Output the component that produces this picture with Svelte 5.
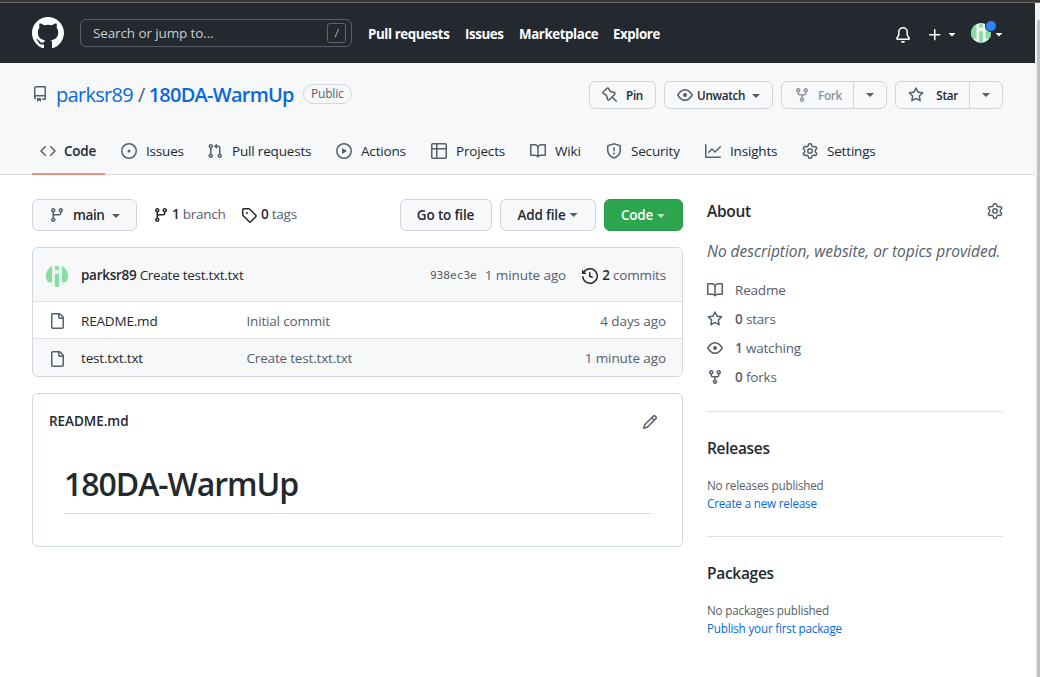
<script>
  const icons = {
    mark: 'M8 0C3.58 0 0 3.58 0 8c0 3.54 2.29 6.53 5.47 7.59.4.07.55-.17.55-.38 0-.19-.01-.82-.01-1.49-2.01.37-2.53-.49-2.69-.94-.09-.23-.48-.94-.82-1.13-.28-.15-.68-.52-.01-.53.63-.01 1.08.58 1.23.82.72 1.21 1.87.87 2.33.66.07-.52.28-.87.51-1.07-1.78-.2-3.64-.89-3.64-3.95 0-.87.31-1.59.82-2.15-.08-.2-.36-1.02.08-2.12 0 0 .67-.21 2.2.82.64-.18 1.32-.27 2-.27.68 0 1.36.09 2 .27 1.53-1.04 2.2-.82 2.2-.82.44 1.1.16 1.92.08 2.12.51.56.82 1.27.82 2.15 0 3.07-1.87 3.75-3.65 3.95.29.25.54.73.54 1.48 0 1.07-.01 1.93-.01 2.2 0 .21.15.46.55.38A8.013 8.013 0 0016 8c0-4.42-3.58-8-8-8z',
    repo: 'M2 2.5A2.5 2.5 0 014.5 0h8.75a.75.75 0 01.75.75v12.5a.75.75 0 01-.75.75h-2.5a.75.75 0 110-1.5h1.75v-2h-8a1 1 0 00-.714 1.7.75.75 0 01-1.072 1.05A2.495 2.495 0 012 11.5v-9zm10.5-1V9h-8c-.356 0-.694.074-1 .208V2.5a1 1 0 011-1h8zM5 12.25v3.25a.25.25 0 00.4.2l1.45-1.087a.25.25 0 01.3 0L8.6 15.7a.25.25 0 00.4-.2v-3.25a.25.25 0 00-.25-.25h-3.5a.25.25 0 00-.25.25z',
    code: 'M4.72 3.22a.75.75 0 011.06 1.06L2.06 8l3.72 3.72a.75.75 0 11-1.06 1.06L.47 8.53a.75.75 0 010-1.06l4.25-4.25zm6.56 0a.75.75 0 10-1.06 1.06L13.94 8l-3.72 3.72a.75.75 0 101.06 1.06l4.25-4.25a.75.75 0 000-1.06l-4.25-4.25z',
    issue: 'M8 9.5a1.5 1.5 0 100-3 1.5 1.5 0 000 3zM8 0a8 8 0 100 16A8 8 0 008 0zM1.5 8a6.5 6.5 0 1113 0 6.5 6.5 0 01-13 0z',
    pull: 'M7.177 3.073L9.573.677A.25.25 0 0110 .854v4.792a.25.25 0 01-.427.177L7.177 3.427a.25.25 0 010-.354zM3.75 2.5a.75.75 0 100 1.5.75.75 0 000-1.5zm-2.25.75a2.25 2.25 0 113 2.122v5.256a2.251 2.251 0 11-1.5 0V5.372A2.25 2.25 0 011.5 3.25zM11 2.5h-1V4h1a1 1 0 011 1v5.628a2.251 2.251 0 101.5 0V5A2.5 2.5 0 0011 2.5zm1 10.25a.75.75 0 111.5 0 .75.75 0 01-1.5 0zM3.75 12a.75.75 0 100 1.5.75.75 0 000-1.5z',
    play: 'M1.5 8a6.5 6.5 0 1113 0 6.5 6.5 0 01-13 0zM8 0a8 8 0 100 16A8 8 0 008 0zM6.379 5.227A.25.25 0 006 5.442v5.117a.25.25 0 00.379.214l4.264-2.559a.25.25 0 000-.428L6.379 5.227z',
    table: 'M1.75 0A1.75 1.75 0 000 1.75v12.5C0 15.216.784 16 1.75 16h12.5A1.75 1.75 0 0016 14.25V1.75A1.75 1.75 0 0014.25 0H1.75zM1.5 1.75a.25.25 0 01.25-.25H5V5H1.5V1.75zM6.5 1.5V5h8V1.75a.25.25 0 00-.25-.25H6.5zm8 5h-8v8h7.75a.25.25 0 00.25-.25V6.5zM5 14.5v-8H1.5v7.75c0 .138.112.25.25.25H5z',
    book: 'M0 1.75A.75.75 0 01.75 1h4.253c1.227 0 2.317.59 3 1.501A3.744 3.744 0 0111.006 1h4.245a.75.75 0 01.75.75v10.5a.75.75 0 01-.75.75h-4.507a2.25 2.25 0 00-1.591.659l-.622.621a.75.75 0 01-1.06 0l-.622-.621A2.25 2.25 0 005.258 13H.75a.75.75 0 01-.75-.75V1.75zm8.755 3a2.25 2.25 0 012.25-2.25H14.5v9h-3.757c-.71 0-1.4.201-1.992.572l.004-7.322zm-1.504 7.324l.004-5.073-.002-2.253A2.25 2.25 0 005.003 2.5H1.5v9h3.757a3.75 3.75 0 011.994.574z',
    shield: 'M7.467.133a1.75 1.75 0 011.066 0l5.25 1.68A1.75 1.75 0 0115 3.48V7c0 1.566-.32 3.182-1.303 4.682-.983 1.498-2.585 2.813-5.032 3.855a1.7 1.7 0 01-1.33 0c-2.447-1.042-4.049-2.357-5.032-3.855C1.32 10.182 1 8.566 1 7V3.48a1.75 1.75 0 011.217-1.667l5.25-1.68zm.61 1.429a.25.25 0 00-.153 0l-5.25 1.68a.25.25 0 00-.174.238V7c0 1.358.275 2.666 1.057 3.86.784 1.194 2.121 2.34 4.366 3.297a.2.2 0 00.154 0c2.245-.956 3.582-2.104 4.366-3.298C13.225 9.666 13.5 8.36 13.5 7V3.48a.25.25 0 00-.174-.237l-5.25-1.68zM9 10.5a1 1 0 11-2 0 1 1 0 012 0zm-.25-5.75a.75.75 0 10-1.5 0v3a.75.75 0 001.5 0v-3z',
    graph: 'M1.5 1.75a.75.75 0 00-1.5 0v12.5c0 .414.336.75.75.75h14.5a.75.75 0 000-1.5H1.5V1.75zm14.28 2.53a.75.75 0 00-1.06-1.06L10 7.94 7.53 5.47a.75.75 0 00-1.06 0L3.22 8.72a.75.75 0 001.06 1.06L7 7.06l2.47 2.47a.75.75 0 001.06 0l5.25-5.25z',
    gear: 'M7.429 1.525a6.593 6.593 0 011.142 0c.036.003.108.036.137.146l.289 1.105c.147.56.55.967.997 1.189.174.086.341.183.501.29.417.278.97.423 1.53.27l1.102-.303c.11-.03.175.016.195.046.219.31.41.641.573.989.014.031.022.11-.059.19l-.815.806c-.411.406-.562.957-.53 1.456a4.588 4.588 0 010 .582c-.032.499.119 1.05.53 1.456l.815.806c.08.08.073.159.059.19a6.494 6.494 0 01-.573.99c-.02.029-.086.074-.195.045l-1.103-.303c-.559-.153-1.112-.008-1.529.27-.16.107-.327.204-.5.29-.449.222-.851.628-.998 1.189l-.289 1.105c-.029.11-.101.143-.137.146a6.613 6.613 0 01-1.142 0c-.036-.003-.108-.037-.137-.146l-.289-1.105c-.147-.56-.55-.967-.997-1.189a4.502 4.502 0 01-.501-.29c-.417-.278-.97-.423-1.53-.27l-1.102.303c-.11.03-.175-.016-.195-.046a6.492 6.492 0 01-.573-.989c-.014-.031-.022-.11.059-.19l.815-.806c.411-.406.562-.957.53-1.456a4.587 4.587 0 010-.582c.032-.499-.119-1.05-.53-1.456l-.815-.806c-.08-.08-.073-.159-.059-.19a6.44 6.44 0 01.573-.99c.02-.029.086-.075.195-.045l1.103.303c.559.153 1.112.008 1.529-.27.16-.107.327-.204.5-.29.449-.222.851-.628.998-1.189l.289-1.105c.029-.11.101-.143.137-.146zM8 0c-.236 0-.47.01-.701.03-.743.065-1.29.615-1.458 1.261l-.29 1.106c-.017.066-.078.158-.211.224a5.994 5.994 0 00-.668.386c-.123.082-.233.09-.3.071L3.27 2.776c-.644-.177-1.392.02-1.82.63a7.977 7.977 0 00-.704 1.217c-.315.675-.111 1.422.363 1.891l.815.806c.05.048.098.147.088.294a6.084 6.084 0 000 .772c.01.147-.038.246-.088.294l-.815.806c-.474.469-.678 1.216-.363 1.891.2.428.436.835.704 1.218.428.609 1.176.806 1.82.63l1.103-.303c.066-.019.176-.011.299.071.213.143.436.272.668.386.133.066.194.158.212.224l.289 1.106c.169.646.715 1.196 1.458 1.26a8.094 8.094 0 001.402 0c.743-.064 1.29-.614 1.458-1.26l.29-1.106c.017-.066.078-.158.211-.224a5.98 5.98 0 00.668-.386c.123-.082.233-.09.3-.071l1.102.302c.644.177 1.392-.02 1.82-.63.268-.382.505-.789.704-1.217.315-.675.111-1.422-.364-1.891l-.814-.806c-.05-.048-.098-.147-.088-.294a6.1 6.1 0 000-.772c-.01-.147.039-.246.088-.294l.814-.806c.475-.469.679-1.216.364-1.891a7.992 7.992 0 00-.704-1.218c-.428-.609-1.176-.806-1.82-.63l-1.103.303c-.066.019-.176.011-.299-.071a5.991 5.991 0 00-.668-.386c-.133-.066-.194-.158-.212-.224L10.16 1.29C9.99.645 9.444.095 8.701.031A8.094 8.094 0 008 0zm1.5 8a1.5 1.5 0 11-3 0 1.5 1.5 0 013 0zM11 8a3 3 0 11-6 0 3 3 0 016 0z',
    fork: 'M5 3.25a.75.75 0 11-1.5 0 .75.75 0 011.5 0zm0 2.122a2.25 2.25 0 10-1.5 0v.878A2.25 2.25 0 005.75 8.5h1.5v2.128a2.251 2.251 0 101.5 0V8.5h1.5a2.25 2.25 0 002.25-2.25v-.878a2.25 2.25 0 10-1.5 0v.878a.75.75 0 01-.75.75h-4.5A.75.75 0 015 6.25v-.878zm3.75 7.378a.75.75 0 11-1.5 0 .75.75 0 011.5 0zm3-8.75a.75.75 0 100-1.5.75.75 0 000 1.5z',
    eye: 'M1.679 7.932c.412-.621 1.242-1.75 2.366-2.717C5.175 4.242 6.527 3.5 8 3.5c1.473 0 2.824.742 3.955 1.715 1.124.967 1.954 2.096 2.366 2.717a.119.119 0 010 .136c-.412.621-1.242 1.75-2.366 2.717C10.825 11.758 9.473 12.5 8 12.5c-1.473 0-2.824-.742-3.955-1.715C2.92 9.818 2.09 8.69 1.679 8.068a.119.119 0 010-.136zM8 2c-1.981 0-3.67.992-4.933 2.078C1.797 5.169.88 6.423.43 7.1a1.619 1.619 0 000 1.798c.45.678 1.367 1.932 2.637 3.024C4.329 13.008 6.019 14 8 14c1.981 0 3.67-.992 4.933-2.078 1.27-1.091 2.187-2.345 2.637-3.023a1.619 1.619 0 000-1.798c-.45-.678-1.367-1.932-2.637-3.023C11.671 2.992 9.981 2 8 2zm0 8a2 2 0 100-4 2 2 0 000 4z',
    star: 'M8 .25a.75.75 0 01.673.418l1.882 3.815 4.21.612a.75.75 0 01.416 1.279l-3.046 2.97.719 4.192a.75.75 0 01-1.088.791L8 12.347l-3.766 1.98a.75.75 0 01-1.088-.79l.72-4.194L.818 6.374a.75.75 0 01.416-1.28l4.21-.611L7.327.668A.75.75 0 018 .25zm0 2.445L6.615 5.5a.75.75 0 01-.564.41l-3.097.45 2.24 2.184a.75.75 0 01.216.664l-.528 3.084 2.769-1.456a.75.75 0 01.698 0l2.77 1.456-.53-3.084a.75.75 0 01.216-.664l2.24-2.183-3.096-.45a.75.75 0 01-.564-.41L8 2.694v.001z',
    pin: 'M4.456.734a1.75 1.75 0 012.826.504l.613 1.327a3.081 3.081 0 002.084 1.707l2.454.584c1.332.317 1.8 1.972.832 2.94L11.06 10l3.72 3.72a.75.75 0 11-1.061 1.06L10 11.06l-2.204 2.205c-.968.968-2.623.5-2.94-.832l-.584-2.454a3.081 3.081 0 00-1.707-2.084l-1.327-.613a1.75 1.75 0 01-.504-2.826L4.456.734zM5.92 1.866a.25.25 0 00-.404-.072L1.794 5.516a.25.25 0 00.072.404l1.328.613A4.582 4.582 0 015.73 9.63l.584 2.454a.25.25 0 00.42.12l5.47-5.47a.25.25 0 00-.12-.42L9.63 5.73a4.581 4.581 0 01-3.098-2.537L5.92 1.866z',
    branch: 'M11.75 2.5a.75.75 0 100 1.5.75.75 0 000-1.5zm-2.25.75a2.25 2.25 0 113 2.122V6A2.5 2.5 0 0110 8.5H6a1 1 0 00-1 1v1.128a2.251 2.251 0 11-1.5 0V5.372a2.25 2.25 0 111.5 0v1.836A2.492 2.492 0 016 7h4a1 1 0 001-1v-.628A2.25 2.25 0 019.5 3.25zM4.25 12a.75.75 0 100 1.5.75.75 0 000-1.5zM3.5 3.25a.75.75 0 111.5 0 .75.75 0 01-1.5 0z',
    tag: 'M2.5 7.775V2.75a.25.25 0 01.25-.25h5.025a.25.25 0 01.177.073l6.25 6.25a.25.25 0 010 .354l-5.025 5.025a.25.25 0 01-.354 0l-6.25-6.25a.25.25 0 01-.073-.177zm-1.5 0V2.75C1 1.784 1.784 1 2.75 1h5.025c.464 0 .91.184 1.238.513l6.25 6.25a1.75 1.75 0 010 2.474l-5.026 5.026a1.75 1.75 0 01-2.474 0l-6.25-6.25A1.75 1.75 0 011 7.775zM6 5a1 1 0 100 2 1 1 0 000-2z',
    history: 'M1.643 3.143L.427 1.927A.25.25 0 000 2.104V5.75c0 .138.112.25.25.25h3.646a.25.25 0 00.177-.427L2.715 4.215a6.5 6.5 0 11-1.18 4.458.75.75 0 10-1.493.154 8.001 8.001 0 101.6-5.684zM7.75 4a.75.75 0 01.75.75v2.992l2.028.812a.75.75 0 01-.557 1.392l-2.5-1A.75.75 0 017 8.25v-3.5A.75.75 0 017.75 4z',
    file: 'M2 1.75C2 .784 2.784 0 3.75 0h6.586c.464 0 .909.184 1.237.513l2.914 2.914c.329.328.513.773.513 1.237v9.586A1.75 1.75 0 0113.25 16h-9.5A1.75 1.75 0 012 14.25V1.75zm1.75-.25a.25.25 0 00-.25.25v12.5c0 .138.112.25.25.25h9.5a.25.25 0 00.25-.25V6h-2.75A1.75 1.75 0 019 4.25V1.5H3.75zm6.75.062V4.25c0 .138.112.25.25.25h2.688a.252.252 0 00-.011-.013l-2.914-2.914a.272.272 0 00-.013-.011z',
    pencil: 'M11.013 1.427a1.75 1.75 0 012.474 0l1.086 1.086a1.75 1.75 0 010 2.474l-8.61 8.61c-.21.21-.47.364-.756.445l-3.251.93a.75.75 0 01-.927-.928l.929-3.25a1.75 1.75 0 01.445-.758l8.61-8.61zm1.414 1.06a.25.25 0 00-.354 0L10.811 3.75l1.439 1.44 1.263-1.263a.25.25 0 000-.354l-1.086-1.086zM11.189 6.25L9.75 4.81l-6.286 6.287a.25.25 0 00-.064.108l-.558 1.953 1.953-.558a.249.249 0 00.108-.064l6.286-6.286z',
    bell: 'M8 16a2 2 0 001.985-1.75c.017-.137-.097-.25-.235-.25h-3.5c-.138 0-.252.113-.235.25A2 2 0 008 16zM8 1.5A3.5 3.5 0 004.5 5v2.947c0 .346-.102.683-.294.97l-1.703 2.556a.018.018 0 00-.003.01l.001.006c0 .002.002.004.004.006a.017.017 0 00.006.004l.007.001h10.964l.007-.001a.016.016 0 00.006-.004.016.016 0 00.004-.006l.001-.007a.017.017 0 00-.003-.01l-1.703-2.554a1.75 1.75 0 01-.294-.97V5A3.5 3.5 0 008 1.5zM3 5a5 5 0 0110 0v2.947c0 .05.015.098.042.139l1.703 2.555A1.518 1.518 0 0113.482 13H2.518a1.518 1.518 0 01-1.263-2.36l1.703-2.554A.25.25 0 003 7.947V5z',
    plus: 'M7.75 2a.75.75 0 01.75.75V7h4.25a.75.75 0 110 1.5H8.5v4.25a.75.75 0 11-1.5 0V8.5H2.75a.75.75 0 010-1.5H7V2.75A.75.75 0 017.75 2z'
  };

  const links = [
    { label: 'Pull requests', width: 97 },
    { label: 'Issues', width: 54 },
    { label: 'Marketplace', width: 94 },
    { label: 'Explore', width: 60 }
  ];

  const tabs = [
    { icon: 'code', label: 'Code', width: 73, active: true },
    { icon: 'issue', label: 'Issues', width: 78 },
    { icon: 'pull', label: 'Pull requests', width: 121 },
    { icon: 'play', label: 'Actions', width: 87 },
    { icon: 'table', label: 'Projects', width: 91 },
    { icon: 'book', label: 'Wiki', width: 68 },
    { icon: 'shield', label: 'Security', width: 91 },
    { icon: 'graph', label: 'Insights', width: 89 },
    { icon: 'gear', label: 'Settings', width: 91 }
  ];

  const files = [
    { name: 'README.md', message: 'Initial commit', age: '4 days ago' },
    { name: 'test.txt.txt', message: 'Create test.txt.txt', age: '1 minute ago' }
  ];

  const stats = [
    { icon: 'book', count: '', label: 'Readme' },
    { icon: 'star', count: '0', label: 'stars' },
    { icon: 'eye', count: '1', label: 'watching' },
    { icon: 'fork', count: '0', label: 'forks' }
  ];
</script>

{#snippet icon(name, size = 16)}
  <svg class="icon" width={size} height={size} viewBox="0 0 16 16" fill="currentColor" fill-rule="evenodd" aria-hidden="true">
    <path d={icons[name]} />
  </svg>
{/snippet}

{#snippet identicon(size)}
  <svg class="identicon" width={size} height={size} viewBox="0 0 20 20" aria-hidden="true">
    <rect width="20" height="20" fill="#e9f6ed" />
    <g fill="#86dca4">
      <path d="M0 0h5.4v15.6H0zM14.6 0H20v15.6h-5.4z" />
      <path d="M8.2 1.2h3.6v3.4H8.2zM8.2 8.2h3.6V20H8.2z" />
    </g>
  </svg>
{/snippet}

<div class="window">
  <div class="chrome"></div>
  <div class="viewport">
    <div class="page">
      <header class="topbar">
        <span class="logo">{@render icon('mark', 32)}</span>
        <div class="search">
          <span>Search or jump to...</span>
          <svg width="20" height="20" viewBox="0 0 20 20" fill="none" stroke="#5d656d" aria-hidden="true">
            <rect x=".5" y=".5" width="18" height="19" rx="2.5" />
            <path d="M11.5 6 8 14.5" stroke="#a5abb1" />
          </svg>
        </div>
        <nav class="links">
          {#each links as link}
            <a href="#top" style:width="{link.width}px">{link.label}</a>
          {/each}
        </nav>
        <div class="tools">
          {@render icon('bell')}
          <span class="plus">{@render icon('plus')}</span>
          <i class="caret"></i>
          <span class="avatar">{@render identicon(20)}<i class="dot"></i></span>
          <i class="caret"></i>
        </div>
      </header>

      <section class="repohead">
        <div class="titlebar">
          <span class="muted repoicon">{@render icon('repo')}</span>
          <h1><a class="owner" href="#owner">parksr89</a><span class="slash">/</span><a class="name" href="#repo">180DA-WarmUp</a></h1>
          <span class="badge">Public</span>
          <div class="actions">
            <button class="btn small pin">{@render icon('pin')}<span>Pin</span></button>
            <button class="btn small watch">{@render icon('eye')}<span>Unwatch</span><i class="caret"></i></button>
            <div class="btn small split fork"><span class="main dim">{@render icon('fork')}<span>Fork</span></span><span class="drop"><i class="caret"></i></span></div>
            <div class="btn small split star"><span class="main">{@render icon('star')}<span>Star</span></span><span class="drop"><i class="caret"></i></span></div>
          </div>
        </div>
        <nav class="tabs">
          {#each tabs as tab}
            <a href="#tab" class="tab" class:active={tab.active} style:width="{tab.width}px">{@render icon(tab.icon)}<span>{tab.label}</span></a>
          {/each}
        </nav>
      </section>

      <div class="content">
        <main>
          <div class="toolbar">
            <button class="btn branchbtn">{@render icon('branch')}<span>main</span><i class="caret"></i></button>
            <span class="count branches">{@render icon('branch')}<span><b>1</b> branch</span></span>
            <span class="count">{@render icon('tag')}<span><b>0</b> tags</span></span>
            <div class="filebtns">
              <button class="btn goto"><span>Go to file</span></button>
              <button class="btn add"><span>Add file</span><i class="caret"></i></button>
              <button class="btn green"><span>Code</span><i class="caret"></i></button>
            </div>
          </div>

          <div class="box">
            <div class="commit">
              <span class="face">{@render identicon(22)}</span>
              <span class="message"><b>parksr89</b> Create test.txt.txt</span>
              <span class="hash">938ec3e</span>
              <span class="when">1 minute ago</span>
              <span class="commits">{@render icon('history')}<span><b>2</b> commits</span></span>
            </div>
            {#each files as file}
              <div class="row">
                {@render icon('file')}
                <span class="filename">{file.name}</span>
                <span class="filemsg">{file.message}</span>
                <span class="age">{file.age}</span>
              </div>
            {/each}
          </div>

          <article class="readme">
            <div class="readmehead"><span>README.md</span>{@render icon('pencil')}</div>
            <h2>180DA-WarmUp</h2>
          </article>
        </main>

        <aside>
          <section class="about">
            <div class="abouthead"><h3>About</h3>{@render icon('gear')}</div>
            <p class="desc">No description, website, or topics provided.</p>
            <ul>
              {#each stats as stat}
                <li>{@render icon(stat.icon)}<span>{#if stat.count}<b>{stat.count}</b>{' '}{/if}{stat.label}</span></li>
              {/each}
            </ul>
          </section>
          <section class="side">
            <h3>Releases</h3>
            <p>No releases published</p>
            <a href="#release">Create a new release</a>
          </section>
          <section class="side">
            <h3>Packages</h3>
            <p>No packages published</p>
            <a href="#package">Publish your first package</a>
          </section>
        </aside>
      </div>
    </div>
    <div class="scrollbar"><div class="thumb"></div></div>
  </div>
</div>

<style>
  :global(body) { margin: 0; background: #fff; overflow: hidden; }
  .window, .window * { box-sizing: border-box; }
  .window {
    width: 1040px; height: 677px; display: flex; flex-direction: column; overflow: hidden;
    font-family: "Open Sans", "Noto Sans", sans-serif; font-size: 13.5px; line-height: 21px;
    letter-spacing: -0.18px; color: #24292f; white-space: nowrap;
  }
  a { color: inherit; text-decoration: none; }
  h1, h2, h3, p, ul { margin: 0; padding: 0; font-weight: 600; }
  p { font-weight: 400; }
  b { font-weight: 600; color: #24292f; }
  .icon { display: block; flex: none; }
  .muted { color: #57606a; }
  .chrome { height: 3px; flex: none; background: #373737; border-bottom: 1px solid #676767; }
  .viewport { flex: 1; display: flex; min-height: 0; }
  .page { width: 1035px; flex: none; }
  .scrollbar { flex: 1; background: #f1f1f1; padding: 17px 0 0 2px; }
  .thumb { height: 100%; background: #c1c1c1; }

  .topbar { height: 60px; background: #24292f; color: #fff; display: flex; align-items: center; padding: 0 32px; }
  .logo { width: 48px; }
  .search {
    width: 272px; height: 28px; border: 1px solid #57606a; border-radius: 6px; display: flex;
    align-items: center; justify-content: space-between; padding: 0 4px 0 12px; color: #c9cdd1; margin-right: 16px;
    font-size: 13.5px; letter-spacing: -0.12px;
  }
  .links { display: flex; padding-top: 3px; font-weight: 700; font-size: 13.3px; letter-spacing: -0.4px; }
  .tools { margin-left: auto; display: flex; align-items: center; padding-top: 3px; }
  .plus { margin: 0 4px 0 16px; }
  .tools .caret { width: 8px; }
  .tools .icon { margin-left: -1px; margin-right: 1px; }
  .avatar { position: relative; display: flex; margin: -3px 4px 0 15px; }
  .avatar .identicon { border-radius: 50%; }
  .dot { position: absolute; left: 14px; top: -3px; width: 12px; height: 12px; border-radius: 50%; background: #2f81f7; border: 1px solid #24292f; }
  .caret { display: inline-block; width: 8px; height: 4px; flex: none; background: currentColor; clip-path: polygon(0 0, 100% 0, 50% 100%); }

  .repohead { height: 112px; background: #f6f8fa; border-bottom: 1px solid #d8dee4; padding: 16px 32px 0; }
  .titlebar { height: 32px; display: flex; align-items: center; }
  .repoicon { width: 24px; margin-top: -2px; }
  h1 { font-size: 20px; font-weight: 400; color: #0969da; letter-spacing: -0.7px; margin-top: -2px; }
  .slash { color: #57606a; margin: 0 4px 0 5px; }
  .name { font-weight: 600; letter-spacing: -0.75px; }
  .badge { margin: -2px 0 0 9px; height: 20px; width: 49px; border: 1px solid #d0d7de; border-radius: 10px; font-size: 12px; line-height: 18px; text-align: center; color: #57606a; font-weight: 500; }
  .actions { margin-left: auto; display: flex; gap: 8px; }
  .btn {
    font: inherit; font-weight: 600; letter-spacing: -0.3px; color: #24292f; background: #f6f8fa; border: 1px solid #d0d5db; border-radius: 6px;
    height: 32px; padding: 0 12px; display: flex; align-items: center;
  }
  .btn .icon, .btn .caret { color: #57606a; }
  .small { height: 28px; font-size: 11.7px; }
  .small span { position: relative; top: 0.5px; }
  .small .main, .small .drop { top: 0; }
  .pin { width: 67px; }
  .pin span, .main > span { margin-left: 8px; }
  .watch { width: 109px; }
  .watch span { margin-left: 4px; }
  .watch .caret { margin-left: auto; margin-top: 2px; }
  .split { padding: 0; }
  .main { flex: 1; height: 100%; padding: 0 11px 0 12px; display: flex; align-items: center; justify-content: space-between; border-right: 1px solid #d0d5db; }
  .drop { width: 32px; flex: none; display: flex; justify-content: center; }
  .dim, .dim .icon { color: #8c959f; }
  .fork { width: 106px; }
  .star { width: 108px; }
  .tabs { display: flex; gap: 8px; margin-top: 16px; height: 48px; }
  .tab { display: flex; align-items: center; padding: 0 8px; height: 48px; border-bottom: 2px solid transparent; }
  .tab span { padding-top: 2px; }
  .tab .icon { color: #57606a; margin-right: 9px; margin-top: 1px; }
  .tab.active { font-weight: 600; letter-spacing: -0.25px; border-color: #f0907c; }
  .tab.active .icon { margin-right: 8px; }

  .content { display: flex; gap: 24px; padding: 24px 32px 0; }
  main { width: 651px; }
  .toolbar { display: flex; align-items: center; }
  .branchbtn { width: 105px; padding: 0 16px; letter-spacing: -0.4px; }
  .branchbtn span { margin-left: 8px; }
  .branchbtn .caret { margin: 2px 0 0 auto; }
  .count { display: flex; align-items: center; color: #57606a; letter-spacing: -0.25px; }
  .count span { padding-bottom: 2px; }
  .count .icon { color: #24292f; margin-right: 4px; }
  .branches { margin: 0 15.5px 0 16px; }
  .branches .icon { margin-right: 3px; }
  .filebtns { margin-left: auto; display: flex; gap: 8px; }
  .filebtns .btn { justify-content: center; gap: 4px; padding-right: 13px; letter-spacing: -0.15px; }
  .goto { width: 92px; }
  .add { width: 96px; }
  .filebtns .green { width: 79px; background: #2da44e; border-color: #2a9749; color: #fff; letter-spacing: -0.3px; }
  .green .caret { color: #b9e2c5; margin-top: 2px; }

  .box { margin-top: 16px; border: 1px solid #d0d7de; border-radius: 6px; overflow: hidden; }
  .commit { height: 53px; background: #f6f8fa; display: flex; align-items: center; padding: 2px 16px 0 13px; color: #57606a; }
  .face { width: 35px; display: flex; }
  .face .identicon { border-radius: 50%; }
  .message { color: #24292f; flex: 1; letter-spacing: -0.28px; }
  .hash { font: 11.3px "DejaVu Sans Mono", monospace; letter-spacing: -0.1px; margin-right: 8px; }
  .when { letter-spacing: -0.1px; }
  .commits { display: flex; align-items: center; margin-left: 16px; }
  .commits .icon { color: #24292f; margin-right: 4px; }
  .row { height: 37px; border-top: 1px solid #d8dee4; display: flex; align-items: center; padding: 2px 16px 0; color: #57606a; }
  .row:last-child { background: #f6f8fa; height: 38px; }
  .filename { width: 165.5px; margin-left: 16px; color: #24292f; }
  .age { margin-left: auto; letter-spacing: -0.1px; }

  .readme { margin-top: 16px; height: 154px; border: 1px solid #d0d7de; border-radius: 6px; padding: 16px 24px 0 16px; }
  .readmehead { display: flex; justify-content: space-between; align-items: center; height: 24px; font-weight: 600; letter-spacing: -0.05px; }
  .readmehead span { padding-bottom: 2px; }
  .readmehead .icon { color: #57606a; }
  h2 { margin: 27px 7px 0 15px; padding-left: 0; height: 53px; line-height: 46px; font-size: 32px; letter-spacing: -1.05px; position: relative; border-bottom: 1px solid #d8dee4; }

  aside { width: 296px; }
  h3 { font-size: 15.5px; line-height: 24px; letter-spacing: -0.3px; }
  .about { height: 213px; border-bottom: 1px solid #d8dee4; }
  .abouthead { display: flex; justify-content: space-between; align-items: center; color: #57606a; }
  .abouthead h3 { color: #24292f; }
  .desc { margin-top: 16px; font-size: 15.5px; line-height: 24px; font-style: italic; color: #57606a; letter-spacing: -0.02px; }
  ul { list-style: none; margin-top: 16px; color: #57606a; font-weight: 400; }
  li { display: flex; align-items: center; height: 21px; margin-bottom: 8px; }
  li span { padding-top: 2px; }
  li .icon { margin-right: 12px; margin-top: 1px; }
  li b { color: #57606a; }
  .side { height: 125px; padding-top: 24px; border-bottom: 1px solid #d8dee4; font-size: 11.7px; line-height: 18px; color: #57606a; letter-spacing: -0.2px; }
  .side:last-child { border: 0; }
  .side p { margin-top: 16px; }
  .side h3 { color: #24292f; }
  .side a { display: block; color: #0969da; }
</style>
